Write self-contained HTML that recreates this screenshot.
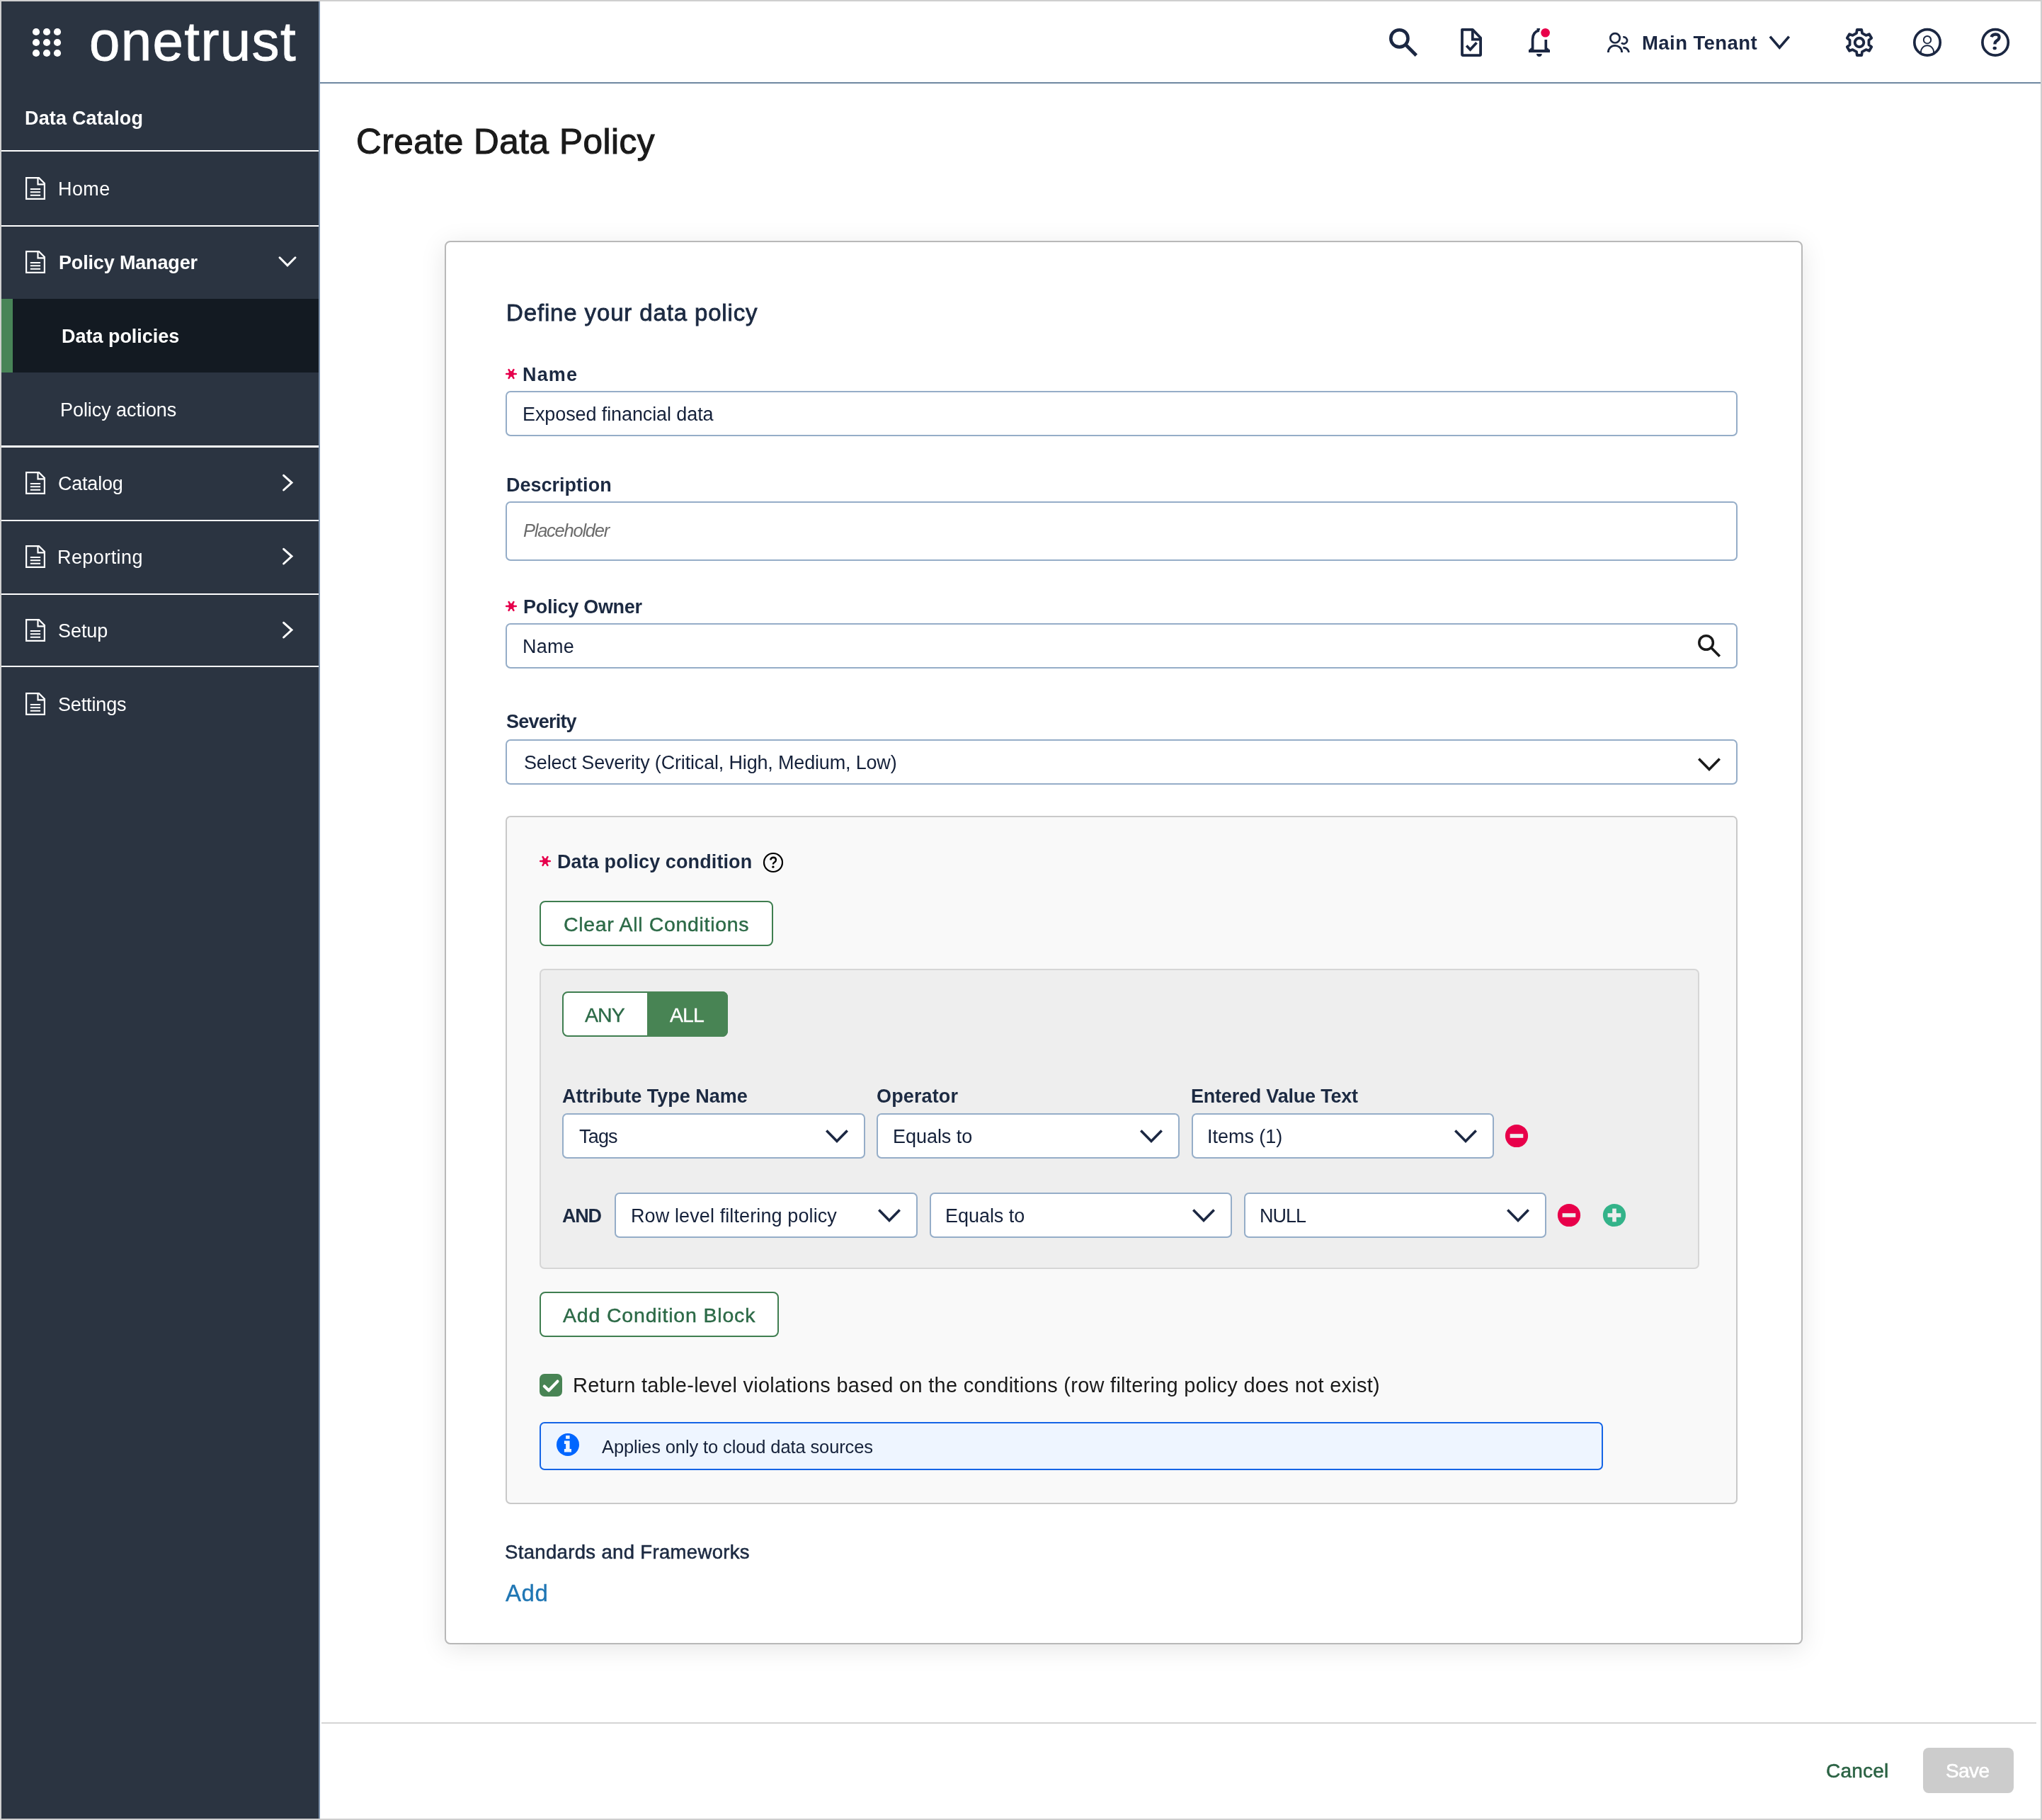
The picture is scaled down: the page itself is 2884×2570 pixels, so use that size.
<!DOCTYPE html><html><head><meta charset="utf-8"><style>
html,body{margin:0;padding:0;}
body{width:2884px;height:2570px;overflow:hidden;position:relative;background:#fff;font-family:"Liberation Sans",sans-serif;}
.t{position:absolute;white-space:nowrap;will-change:transform;}
.r{position:absolute;}
</style></head><body>
<div class="r" style="left:2px;top:2px;width:448px;height:2566px;background:#2b3441;border-radius:0px;box-sizing:border-box;"></div>
<div class="r" style="left:450px;top:2px;width:2px;height:2566px;background:#7b90aa;border-radius:0px;box-sizing:border-box;"></div>
<svg class="r" style="left:0px;top:0px;" width="100" height="100" viewBox="0 0 100 100"><circle cx="51" cy="45" r="5.1" fill="#fff"/><circle cx="51" cy="60" r="5.1" fill="#fff"/><circle cx="51" cy="75" r="5.1" fill="#fff"/><circle cx="66" cy="45" r="5.1" fill="#fff"/><circle cx="66" cy="60" r="5.1" fill="#fff"/><circle cx="66" cy="75" r="5.1" fill="#fff"/><circle cx="81" cy="45" r="5.1" fill="#fff"/><circle cx="81" cy="60" r="5.1" fill="#fff"/><circle cx="81" cy="75" r="5.1" fill="#fff"/></svg>
<div class="t" style="left:126.0px;top:19.1px;font-size:78px;line-height:78px;letter-spacing:1.4px;color:#fff;font-weight:normal;font-style:normal;-webkit-text-stroke:0.9px #fff;">onetrust</div>
<div class="t" style="left:34.7px;top:154.0px;font-size:27px;line-height:27px;letter-spacing:0.18px;color:#fff;font-weight:bold;font-style:normal;">Data Catalog</div>
<div class="r" style="left:2px;top:212px;width:448px;height:2px;background:#fff;border-radius:0px;box-sizing:border-box;"></div>
<div class="r" style="left:2px;top:318px;width:448px;height:2px;background:#fff;border-radius:0px;box-sizing:border-box;"></div>
<div class="r" style="left:2px;top:629px;width:448px;height:3px;background:#fff;border-radius:0px;box-sizing:border-box;"></div>
<div class="r" style="left:2px;top:734px;width:448px;height:2px;background:#fff;border-radius:0px;box-sizing:border-box;"></div>
<div class="r" style="left:2px;top:838px;width:448px;height:2px;background:#fff;border-radius:0px;box-sizing:border-box;"></div>
<div class="r" style="left:2px;top:940px;width:448px;height:2px;background:#fff;border-radius:0px;box-sizing:border-box;"></div>
<div class="r" style="left:2px;top:422px;width:448px;height:104px;background:#131a22;border-radius:0px;box-sizing:border-box;"></div>
<div class="r" style="left:2px;top:422px;width:16px;height:104px;background:#488457;border-radius:0px;box-sizing:border-box;"></div>
<svg class="r" style="left:36px;top:250px;" width="28" height="32" viewBox="0 0 28 32"><path d="M1.1,1.1 H19 L26.9,9 V30.9 H1.1 Z" fill="none" stroke="#fff" stroke-width="2.2" stroke-linejoin="miter"/><path d="M17.5,1.1 V10.4 H26.9" fill="none" stroke="#fff" stroke-width="2.2"/><path d="M6.8,17 H21.1 M6.8,21.2 H21.1 M6.8,25.8 H21.1" stroke="#fff" stroke-width="2.1"/></svg>
<svg class="r" style="left:36px;top:354px;" width="28" height="32" viewBox="0 0 28 32"><path d="M1.1,1.1 H19 L26.9,9 V30.9 H1.1 Z" fill="none" stroke="#fff" stroke-width="2.2" stroke-linejoin="miter"/><path d="M17.5,1.1 V10.4 H26.9" fill="none" stroke="#fff" stroke-width="2.2"/><path d="M6.8,17 H21.1 M6.8,21.2 H21.1 M6.8,25.8 H21.1" stroke="#fff" stroke-width="2.1"/></svg>
<svg class="r" style="left:36px;top:666px;" width="28" height="32" viewBox="0 0 28 32"><path d="M1.1,1.1 H19 L26.9,9 V30.9 H1.1 Z" fill="none" stroke="#fff" stroke-width="2.2" stroke-linejoin="miter"/><path d="M17.5,1.1 V10.4 H26.9" fill="none" stroke="#fff" stroke-width="2.2"/><path d="M6.8,17 H21.1 M6.8,21.2 H21.1 M6.8,25.8 H21.1" stroke="#fff" stroke-width="2.1"/></svg>
<svg class="r" style="left:36px;top:770px;" width="28" height="32" viewBox="0 0 28 32"><path d="M1.1,1.1 H19 L26.9,9 V30.9 H1.1 Z" fill="none" stroke="#fff" stroke-width="2.2" stroke-linejoin="miter"/><path d="M17.5,1.1 V10.4 H26.9" fill="none" stroke="#fff" stroke-width="2.2"/><path d="M6.8,17 H21.1 M6.8,21.2 H21.1 M6.8,25.8 H21.1" stroke="#fff" stroke-width="2.1"/></svg>
<svg class="r" style="left:36px;top:874px;" width="28" height="32" viewBox="0 0 28 32"><path d="M1.1,1.1 H19 L26.9,9 V30.9 H1.1 Z" fill="none" stroke="#fff" stroke-width="2.2" stroke-linejoin="miter"/><path d="M17.5,1.1 V10.4 H26.9" fill="none" stroke="#fff" stroke-width="2.2"/><path d="M6.8,17 H21.1 M6.8,21.2 H21.1 M6.8,25.8 H21.1" stroke="#fff" stroke-width="2.1"/></svg>
<svg class="r" style="left:36px;top:978px;" width="28" height="32" viewBox="0 0 28 32"><path d="M1.1,1.1 H19 L26.9,9 V30.9 H1.1 Z" fill="none" stroke="#fff" stroke-width="2.2" stroke-linejoin="miter"/><path d="M17.5,1.1 V10.4 H26.9" fill="none" stroke="#fff" stroke-width="2.2"/><path d="M6.8,17 H21.1 M6.8,21.2 H21.1 M6.8,25.8 H21.1" stroke="#fff" stroke-width="2.1"/></svg>
<div class="t" style="left:82.1px;top:253.9px;font-size:27px;line-height:27px;letter-spacing:0.4px;color:#fff;font-weight:normal;font-style:normal;">Home</div>
<div class="t" style="left:83.1px;top:357.9px;font-size:27px;line-height:27px;letter-spacing:-0.16px;color:#fff;font-weight:bold;font-style:normal;">Policy Manager</div>
<div class="t" style="left:87.1px;top:461.9px;font-size:27px;line-height:27px;letter-spacing:-0.02px;color:#fff;font-weight:bold;font-style:normal;">Data policies</div>
<div class="t" style="left:85.0px;top:565.9px;font-size:27px;line-height:27px;letter-spacing:-0.06px;color:#fff;font-weight:normal;font-style:normal;">Policy actions</div>
<div class="t" style="left:81.7px;top:670.0px;font-size:27px;line-height:27px;letter-spacing:-0.22px;color:#fff;font-weight:normal;font-style:normal;">Catalog</div>
<div class="t" style="left:80.7px;top:774.0px;font-size:27px;line-height:27px;letter-spacing:0.43px;color:#fff;font-weight:normal;font-style:normal;">Reporting</div>
<div class="t" style="left:81.7px;top:878.0px;font-size:27px;line-height:27px;letter-spacing:-0.06px;color:#fff;font-weight:normal;font-style:normal;">Setup</div>
<div class="t" style="left:81.7px;top:982.0px;font-size:27px;line-height:27px;letter-spacing:-0.15px;color:#fff;font-weight:normal;font-style:normal;">Settings</div>
<svg class="r" style="left:390px;top:355px;" width="32" height="28" viewBox="0 0 32 28"><path d="M5,8.8 L16,19.8 L27,8.8" fill="none" stroke="#fff" stroke-width="3" stroke-linecap="round"/></svg>
<svg class="r" style="left:390px;top:666px;" width="32" height="32" viewBox="0 0 32 32"><path d="M10.6,5.3 L22,15.6 L10.6,26" fill="none" stroke="#fff" stroke-width="3" stroke-linecap="round"/></svg>
<svg class="r" style="left:390px;top:770px;" width="32" height="32" viewBox="0 0 32 32"><path d="M10.6,5.3 L22,15.6 L10.6,26" fill="none" stroke="#fff" stroke-width="3" stroke-linecap="round"/></svg>
<svg class="r" style="left:390px;top:874px;" width="32" height="32" viewBox="0 0 32 32"><path d="M10.6,5.3 L22,15.6 L10.6,26" fill="none" stroke="#fff" stroke-width="3" stroke-linecap="round"/></svg>
<div class="r" style="left:452px;top:116px;width:2430px;height:2px;background:#6f87a1;border-radius:0px;box-sizing:border-box;"></div>
<svg class="r" style="left:1955px;top:35px;" width="55" height="55" viewBox="0 0 55 55"><circle cx="21.4" cy="19.3" r="12.1" fill="none" stroke="#1b2742" stroke-width="4.6"/><path d="M29.9,27.8 L45.3,43.3" stroke="#1b2742" stroke-width="4.8"/></svg>
<svg class="r" style="left:2058px;top:35px;" width="40" height="50" viewBox="0 0 40 50"><path d="M7,6.8 Q7,6.8 8,6.8 H21.8 L33.1,18.5 V42 Q33.1,43.1 32,43.1 H8 Q7,43.1 7,42 Z" fill="none" stroke="#1b2742" stroke-width="3.8" stroke-linejoin="round"/><path d="M21.8,6.8 V20.7 H33.1" fill="none" stroke="#1b2742" stroke-width="3.8"/><path d="M13.2,29.5 L18.5,35 L27.5,25.3" fill="none" stroke="#1b2742" stroke-width="3.8"/></svg>
<svg class="r" style="left:2150px;top:30px;" width="50" height="55" viewBox="0 0 50 55"><path d="M14.6,40 V25.5 Q14.6,15.2 23.8,13" fill="none" stroke="#1b2742" stroke-width="3.7"/><path d="M33.3,26 V40" fill="none" stroke="#1b2742" stroke-width="3.7"/><path d="M9,40 H39 V44.1 H9 Z" fill="#1b2742"/><path d="M11.2,40.5 L14.6,38 M36.8,40.5 L33.3,38" stroke="#1b2742" stroke-width="3"/><path d="M20.5,10 H25.2 L24.5,13 H20.5 Z" fill="#1b2742"/><path d="M20,46 H27.8 Q27.5,50 23.9,50 Q20.3,50 20,46 Z" fill="#1b2742"/><circle cx="32.6" cy="16.2" r="6.3" fill="#e8004a"/></svg>
<svg class="r" style="left:2265px;top:40px;" width="45" height="40" viewBox="0 0 45 40"><circle cx="16" cy="13.8" r="6.7" fill="none" stroke="#1b2742" stroke-width="2.7"/><path d="M6.4,33.9 A9.6,9.6 0 0 1 25.6,33.9" fill="none" stroke="#1b2742" stroke-width="2.8" transform="translate(0,0)"/><path d="M27.3,12.4 A4.8,4.8 0 1 1 25,20.6" fill="none" stroke="#1b2742" stroke-width="2.7"/><path d="M27.3,27.2 A9,9 0 0 1 35.6,33.9" fill="none" stroke="#1b2742" stroke-width="2.8"/></svg>
<div class="t" style="left:2318.5px;top:47.1px;font-size:27.5px;line-height:27.5px;letter-spacing:0.43px;color:#1b2742;font-weight:bold;font-style:normal;">Main Tenant</div>
<svg class="r" style="left:2495px;top:45px;" width="40" height="30" viewBox="0 0 40 30"><path d="M4.9,6.6 L18.3,22.1 L31.7,6.6" fill="none" stroke="#1b2742" stroke-width="3.7"/></svg>
<svg class="r" style="left:2600px;top:34px;" width="52" height="52" viewBox="0 0 52 52"><path d="M22.01,12.79 L22.76,7.99 L29.24,7.99 L29.99,12.79 L35.45,15.94 L39.98,14.19 L43.22,19.80 L39.44,22.85 L39.44,29.15 L43.22,32.20 L39.98,37.81 L35.45,36.06 L29.99,39.21 L29.24,44.01 L22.76,44.01 L22.01,39.21 L16.55,36.06 L12.02,37.81 L8.78,32.20 L12.56,29.15 L12.56,22.85 L8.78,19.80 L12.02,14.19 L16.55,15.94 Z" fill="none" stroke="#1b2742" stroke-width="3.8" stroke-linejoin="round"/><circle cx="26" cy="26" r="6.3" fill="none" stroke="#1b2742" stroke-width="3.9"/></svg>
<svg class="r" style="left:2697px;top:35px;" width="50" height="50" viewBox="0 0 50 50"><circle cx="25" cy="24.9" r="18.2" fill="none" stroke="#1b2742" stroke-width="3.7"/><circle cx="25" cy="21.2" r="5.2" fill="none" stroke="#1b2742" stroke-width="1.9"/><path d="M16.3,40.6 A9,9 0 1 1 33.7,40.6" fill="none" stroke="#1b2742" stroke-width="1.9"/></svg>
<svg class="r" style="left:2793px;top:35px;" width="50" height="50" viewBox="0 0 50 50"><circle cx="25.1" cy="24.9" r="18.2" fill="none" stroke="#1b2742" stroke-width="3.7"/><path d="M19.6,17.2 Q20.6,13.6 25.4,13.4 Q30.6,13.6 30.6,17.6 Q30.4,20.6 27,22.6 Q24.4,24.2 24.4,27.4" fill="none" stroke="#1b2742" stroke-width="4.2"/><ellipse cx="24.2" cy="33" rx="2.7" ry="2.3" fill="#1b2742"/></svg>
<div class="t" style="left:503.0px;top:174.8px;font-size:49.5px;line-height:49.5px;letter-spacing:0.52px;color:#1a1a1a;font-weight:normal;font-style:normal;-webkit-text-stroke:1.1px #1a1a1a;">Create Data Policy</div>
<div class="r" style="left:628px;top:340px;width:1918px;height:1982px;box-sizing:border-box;border:2px solid #b8b8b8;border-radius:8px;background:#fff;box-shadow:0 6px 36px rgba(0,0,0,0.10);"></div>
<div class="t" style="left:715.0px;top:424.9px;font-size:33px;line-height:33px;letter-spacing:0.86px;color:#1c2a42;font-weight:normal;font-style:normal;-webkit-text-stroke:0.8px #1c2a42;">Define your data policy</div>
<svg class="r" style="left:700px;top:510px;" width="40" height="40" viewBox="0 0 40 40"><path d="M15.20,18.00 L28.80,18.00" stroke="#e6004c" stroke-width="2.6" stroke-linecap="round"/><path d="M18.60,12.11 L25.40,23.89" stroke="#e6004c" stroke-width="2.6" stroke-linecap="round"/><path d="M25.40,12.11 L18.60,23.89" stroke="#e6004c" stroke-width="2.6" stroke-linecap="round"/><circle cx="22" cy="18" r="3.9" fill="#e6004c"/></svg>
<div class="t" style="left:738.0px;top:515.8px;font-size:27px;line-height:27px;letter-spacing:1.16px;color:#1c2a42;font-weight:bold;font-style:normal;">Name</div>
<div class="r" style="left:714px;top:552px;width:1740px;height:64px;background:#fff;border:2px solid #95adc8;border-radius:7px;box-sizing:border-box;"></div>
<div class="t" style="left:738.3px;top:571.9px;font-size:27px;line-height:27px;letter-spacing:-0.1px;color:#15213a;font-weight:normal;font-style:normal;">Exposed financial data</div>
<div class="t" style="left:715.2px;top:671.8px;font-size:27px;line-height:27px;letter-spacing:0.01px;color:#1c2a42;font-weight:bold;font-style:normal;">Description</div>
<div class="r" style="left:714px;top:708px;width:1740px;height:84px;background:#fff;border:2px solid #95adc8;border-radius:7px;box-sizing:border-box;"></div>
<div class="t" style="left:739.3px;top:737.1px;font-size:25.5px;line-height:25.5px;letter-spacing:-1.25px;color:#6b6b6b;font-weight:normal;font-style:italic;">Placeholder</div>
<svg class="r" style="left:700px;top:838px;" width="40" height="40" viewBox="0 0 40 40"><path d="M15.20,18.00 L28.80,18.00" stroke="#e6004c" stroke-width="2.6" stroke-linecap="round"/><path d="M18.60,12.11 L25.40,23.89" stroke="#e6004c" stroke-width="2.6" stroke-linecap="round"/><path d="M25.40,12.11 L18.60,23.89" stroke="#e6004c" stroke-width="2.6" stroke-linecap="round"/><circle cx="22" cy="18" r="3.9" fill="#e6004c"/></svg>
<div class="t" style="left:739.2px;top:843.8px;font-size:27px;line-height:27px;letter-spacing:-0.27px;color:#1c2a42;font-weight:bold;font-style:normal;">Policy Owner</div>
<div class="r" style="left:714px;top:880px;width:1740px;height:64px;background:#fff;border:2px solid #95adc8;border-radius:7px;box-sizing:border-box;"></div>
<div class="t" style="left:738.2px;top:899.8px;font-size:27px;line-height:27px;letter-spacing:0.23px;color:#15213a;font-weight:normal;font-style:normal;">Name</div>
<svg class="r" style="left:2390px;top:890px;" width="50" height="50" viewBox="0 0 50 50"><circle cx="19.6" cy="17.5" r="9.8" fill="none" stroke="#1a1a1a" stroke-width="3.5"/><path d="M26.6,24.5 L38.8,36.8" stroke="#1a1a1a" stroke-width="3.6"/></svg>
<div class="t" style="left:714.5px;top:1005.8px;font-size:27px;line-height:27px;letter-spacing:-0.78px;color:#1c2a42;font-weight:bold;font-style:normal;">Severity</div>
<div class="r" style="left:714px;top:1044px;width:1740px;height:64px;background:#fff;border:2px solid #95adc8;border-radius:7px;box-sizing:border-box;"></div>
<div class="t" style="left:739.7px;top:1063.8px;font-size:27px;line-height:27px;letter-spacing:-0.17px;color:#15213a;font-weight:normal;font-style:normal;">Select Severity (Critical, High, Medium, Low)</div>
<svg class="r" style="left:2396px;top:1066px;" width="36" height="26" viewBox="0 0 36 26"><path d="M3.3,5.5 L18,20.5 L32.7,5.5" fill="none" stroke="#1a1a1a" stroke-width="3.6"/></svg>
<div class="r" style="left:714px;top:1152px;width:1740px;height:972px;background:#f9f9f9;border:2px solid #c9c9c9;border-radius:7px;box-sizing:border-box;"></div>
<svg class="r" style="left:740px;top:1200px;" width="40" height="40" viewBox="0 0 40 40"><path d="M23.20,16.00 L36.80,16.00" stroke="#e6004c" stroke-width="2.6" stroke-linecap="round"/><path d="M26.60,10.11 L33.40,21.89" stroke="#e6004c" stroke-width="2.6" stroke-linecap="round"/><path d="M33.40,10.11 L26.60,21.89" stroke="#e6004c" stroke-width="2.6" stroke-linecap="round"/><circle cx="30" cy="16" r="3.9" fill="#e6004c"/></svg>
<div class="t" style="left:786.5px;top:1204.3px;font-size:27px;line-height:27px;letter-spacing:0.11px;color:#1c2a42;font-weight:bold;font-style:normal;">Data policy condition</div>
<svg class="r" style="left:1072px;top:1198px;" width="40" height="40" viewBox="0 0 40 40"><circle cx="20" cy="20" r="13" fill="none" stroke="#000" stroke-width="2.2"/><path d="M16.2,16.4 Q16.8,12.8 20.3,12.8 Q23.8,12.9 23.9,16.2 Q23.9,18.4 21.6,19.8 Q19.9,20.9 19.9,22.6" fill="none" stroke="#000" stroke-width="2.4"/><circle cx="19.9" cy="26.2" r="1.6" fill="#000"/></svg>
<div class="r" style="left:762px;top:1272px;width:330px;height:64px;background:#fff;border:2px solid #3f7e50;border-radius:8px;box-sizing:border-box;"></div>
<div class="t" style="left:796.3px;top:1290.9px;font-size:28.5px;line-height:28.5px;letter-spacing:0.67px;color:#2c6a47;font-weight:normal;font-style:normal;-webkit-text-stroke:0.45px #2c6a47;">Clear All Conditions</div>
<div class="r" style="left:762px;top:1368px;width:1638px;height:424px;background:#eeeeee;border:2px solid #d6d6d6;border-radius:7px;box-sizing:border-box;"></div>
<div class="r" style="left:794px;top:1400px;width:234px;height:64px;background:#fff;border:2px solid #3f7e50;border-radius:8px;box-sizing:border-box;"></div>
<div class="r" style="left:914px;top:1400px;width:114px;height:64px;background:#488454;border-radius:0 8px 8px 0;"></div>
<div class="t" style="left:826.2px;top:1418.8px;font-size:28.5px;line-height:28.5px;letter-spacing:-0.9px;color:#2c6a47;font-weight:normal;font-style:normal;-webkit-text-stroke:0.35px #2c6a47;">ANY</div>
<div class="t" style="left:946.1px;top:1418.8px;font-size:28.5px;line-height:28.5px;letter-spacing:-0.93px;color:#fff;font-weight:normal;font-style:normal;-webkit-text-stroke:0.35px #fff;">ALL</div>
<div class="t" style="left:794.3px;top:1534.8px;font-size:27px;line-height:27px;letter-spacing:-0.02px;color:#1c2a42;font-weight:bold;font-style:normal;">Attribute Type Name</div>
<div class="t" style="left:1237.6px;top:1534.8px;font-size:27px;line-height:27px;letter-spacing:0.13px;color:#1c2a42;font-weight:bold;font-style:normal;">Operator</div>
<div class="t" style="left:1682.0px;top:1534.8px;font-size:27px;line-height:27px;letter-spacing:-0.21px;color:#1c2a42;font-weight:bold;font-style:normal;">Entered Value Text</div>
<div class="r" style="left:794px;top:1572px;width:428px;height:64px;background:#fff;border:2px solid #95adc8;border-radius:7px;box-sizing:border-box;"></div>
<div class="r" style="left:1238px;top:1572px;width:428px;height:64px;background:#fff;border:2px solid #95adc8;border-radius:7px;box-sizing:border-box;"></div>
<div class="r" style="left:1683px;top:1572px;width:427px;height:64px;background:#fff;border:2px solid #95adc8;border-radius:7px;box-sizing:border-box;"></div>
<div class="r" style="left:868px;top:1684px;width:428px;height:64px;background:#fff;border:2px solid #95adc8;border-radius:7px;box-sizing:border-box;"></div>
<div class="r" style="left:1313px;top:1684px;width:427px;height:64px;background:#fff;border:2px solid #95adc8;border-radius:7px;box-sizing:border-box;"></div>
<div class="r" style="left:1757px;top:1684px;width:427px;height:64px;background:#fff;border:2px solid #95adc8;border-radius:7px;box-sizing:border-box;"></div>
<svg class="r" style="left:1164px;top:1591px;" width="36" height="26" viewBox="0 0 36 26"><path d="M3.3,5.5 L18,20.5 L32.7,5.5" fill="none" stroke="#1b2742" stroke-width="3.6"/></svg>
<svg class="r" style="left:1608px;top:1591px;" width="36" height="26" viewBox="0 0 36 26"><path d="M3.3,5.5 L18,20.5 L32.7,5.5" fill="none" stroke="#1b2742" stroke-width="3.6"/></svg>
<svg class="r" style="left:2052px;top:1591px;" width="36" height="26" viewBox="0 0 36 26"><path d="M3.3,5.5 L18,20.5 L32.7,5.5" fill="none" stroke="#1b2742" stroke-width="3.6"/></svg>
<svg class="r" style="left:1238px;top:1703px;" width="36" height="26" viewBox="0 0 36 26"><path d="M3.3,5.5 L18,20.5 L32.7,5.5" fill="none" stroke="#1b2742" stroke-width="3.6"/></svg>
<svg class="r" style="left:1682px;top:1703px;" width="36" height="26" viewBox="0 0 36 26"><path d="M3.3,5.5 L18,20.5 L32.7,5.5" fill="none" stroke="#1b2742" stroke-width="3.6"/></svg>
<svg class="r" style="left:2126px;top:1703px;" width="36" height="26" viewBox="0 0 36 26"><path d="M3.3,5.5 L18,20.5 L32.7,5.5" fill="none" stroke="#1b2742" stroke-width="3.6"/></svg>
<div class="t" style="left:818.4px;top:1591.8px;font-size:27px;line-height:27px;letter-spacing:-0.81px;color:#15213a;font-weight:normal;font-style:normal;">Tags</div>
<div class="t" style="left:1261.0px;top:1591.8px;font-size:27px;line-height:27px;letter-spacing:-0.04px;color:#15213a;font-weight:normal;font-style:normal;">Equals to</div>
<div class="t" style="left:1704.5px;top:1591.8px;font-size:27px;line-height:27px;letter-spacing:-0.03px;color:#15213a;font-weight:normal;font-style:normal;">Items (1)</div>
<div class="t" style="left:794.3px;top:1704.3px;font-size:27px;line-height:27px;letter-spacing:-1.3px;color:#1c2a42;font-weight:bold;font-style:normal;">AND</div>
<div class="t" style="left:891.0px;top:1704.0px;font-size:27px;line-height:27px;letter-spacing:0.11px;color:#15213a;font-weight:normal;font-style:normal;">Row level filtering policy</div>
<div class="t" style="left:1335.1px;top:1704.0px;font-size:27px;line-height:27px;letter-spacing:-0.04px;color:#15213a;font-weight:normal;font-style:normal;">Equals to</div>
<div class="t" style="left:1778.8px;top:1704.0px;font-size:27px;line-height:27px;letter-spacing:-0.97px;color:#15213a;font-weight:normal;font-style:normal;">NULL</div>
<svg class="r" style="left:2125px;top:1587px;" width="34" height="34" viewBox="0 0 34 34"><circle cx="17" cy="17" r="16.1" fill="#e8004a"/><rect x="7.6" y="14.2" width="18.7" height="5.6" fill="#eeeeee"/></svg>
<svg class="r" style="left:2199px;top:1699px;" width="34" height="34" viewBox="0 0 34 34"><circle cx="17" cy="17" r="16.1" fill="#e8004a"/><rect x="7.6" y="14.2" width="18.7" height="5.6" fill="#eeeeee"/></svg>
<svg class="r" style="left:2263px;top:1699px;" width="34" height="34" viewBox="0 0 34 34"><circle cx="17" cy="17" r="16.1" fill="#33b389"/><rect x="7.6" y="14.2" width="18.7" height="5.6" fill="#eeeeee"/><rect x="14.2" y="7.6" width="5.6" height="18.7" fill="#eeeeee"/></svg>
<div class="r" style="left:762px;top:1824px;width:338px;height:64px;background:#fff;border:2px solid #3f7e50;border-radius:8px;box-sizing:border-box;"></div>
<div class="t" style="left:795.1px;top:1842.5px;font-size:28.5px;line-height:28.5px;letter-spacing:0.82px;color:#2c6a47;font-weight:normal;font-style:normal;-webkit-text-stroke:0.45px #2c6a47;">Add Condition Block</div>
<svg class="r" style="left:760px;top:1938px;" width="36" height="36" viewBox="0 0 36 36"><rect x="2" y="2" width="32" height="32" rx="7" fill="#488454"/><path d="M8.8,19.6 L15,25.5 L27.4,12.6" fill="none" stroke="#fff" stroke-width="4.2" stroke-linecap="round" stroke-linejoin="round"/></svg>
<div class="t" style="left:809.0px;top:1942.2px;font-size:29px;line-height:29px;letter-spacing:0.27px;color:#1a1a1a;font-weight:normal;font-style:normal;">Return table-level violations based on the conditions (row filtering policy does not exist)</div>
<div class="r" style="left:762px;top:2008px;width:1502px;height:68px;background:#eef5ff;border:2px solid #1464e6;border-radius:7px;box-sizing:border-box;"></div>
<svg class="r" style="left:784px;top:2022px;" width="36" height="36" viewBox="0 0 36 36"><circle cx="18" cy="18" r="16" fill="#0066ff"/><rect x="15.1" y="5.1" width="5.5" height="4.7" fill="#eef5ff"/><path d="M12.9,12.5 H20.6 V24 H23 V28.6 H12.9 V24 H15.1 V17.1 H12.9 Z" fill="#eef5ff"/></svg>
<div class="t" style="left:850.4px;top:2031.4px;font-size:25.5px;line-height:25.5px;letter-spacing:-0.12px;color:#15213a;font-weight:normal;font-style:normal;">Applies only to cloud data sources</div>
<div class="t" style="left:713.2px;top:2177.9px;font-size:27.5px;line-height:27.5px;letter-spacing:0.34px;color:#1c2a42;font-weight:normal;font-style:normal;-webkit-text-stroke:0.55px #1c2a42;">Standards and Frameworks</div>
<div class="t" style="left:714.0px;top:2232.7px;font-size:33px;line-height:33px;letter-spacing:0.57px;color:#1f76b4;font-weight:normal;font-style:normal;-webkit-text-stroke:0.35px #1f76b4;">Add</div>
<div class="r" style="left:454px;top:2432px;width:2422px;height:2px;background:#d5d5d5;border-radius:0px;box-sizing:border-box;"></div>
<div class="t" style="left:2578.6px;top:2486.8px;font-size:28px;line-height:28px;letter-spacing:0.19px;color:#2a6243;font-weight:normal;font-style:normal;-webkit-text-stroke:0.55px #2a6243;">Cancel</div>
<div class="r" style="left:2716px;top:2468px;width:128px;height:64px;background:#cccccc;border-radius:8px;box-sizing:border-box;"></div>
<div class="t" style="left:2748.0px;top:2486.8px;font-size:28px;line-height:28px;letter-spacing:-0.58px;color:#fff;font-weight:normal;font-style:normal;-webkit-text-stroke:0.55px #fff;">Save</div>
<div class="r" style="left:0;top:0;width:2884px;height:2570px;box-sizing:border-box;border:2px solid #cfcfcf;"></div>
</body></html>
